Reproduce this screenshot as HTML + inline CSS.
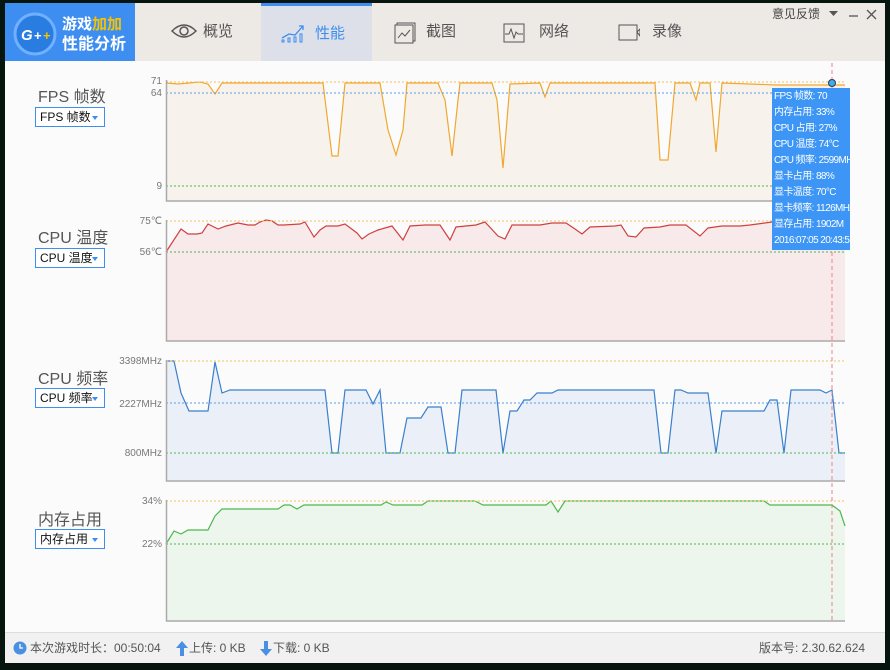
<!DOCTYPE html>
<html><head><meta charset="utf-8"><style>
body{margin:0;width:890px;height:670px;background:#07150f;overflow:hidden;font-family:"Liberation Sans","Noto Sans CJK SC",sans-serif;position:relative}
.win{position:absolute;left:5px;top:3px;width:880px;height:659px;background:#fbfbfb}
.hdr{position:absolute;left:0;top:0;width:880px;height:58px;background:#ede9e5}
.logo{position:absolute;left:0;top:0;width:130px;height:58px;background:#3d8ef0}
.tab{position:absolute;top:0;height:58px;font-size:15px;color:#555;line-height:58px}
.tab.act{background:#dde0e8;color:#3d8ef0;border-top:3px solid #3d8ef0;height:55px;line-height:55px}
.lbl{position:absolute;left:33px;font-size:16px;color:#555}
.dd{position:absolute;left:30px;border:1px solid #3d8ef0;background:#fff;font-size:12px;line-height:18px;color:#111;padding-left:4px;box-sizing:border-box;width:70px;height:20px}
.dd:after{content:"";position:absolute;right:6px;top:8px;border:3px solid transparent;border-top:4px solid #3d8ef0}
.tip{position:absolute;left:767px;top:85px;width:78px;height:162px;background:#3d95f5;color:#fff;font-size:10px;letter-spacing:-0.6px;line-height:16px;padding:1px 0 0 2px;box-sizing:border-box;white-space:nowrap;overflow:hidden}
.ft{position:absolute;left:0;top:629px;width:880px;height:30px;background:#f1f1f1;border-top:1px solid #ddd;font-size:12px;color:#555;line-height:30px}
</style></head><body>
<div class="win">
<div class="hdr">
 <div class="logo">
  <svg width="130" height="58"><circle cx="30" cy="31" r="20" fill="#2a7de0" stroke="#6fb0ff" stroke-width="3"/><text x="16" y="37" font-size="15" font-weight="bold" font-style="italic" fill="#fff" font-family="Liberation Sans">G</text><text x="29" y="37" font-size="13" font-weight="bold" fill="#fff">+</text><text x="38" y="37" font-size="13" font-weight="bold" fill="#f5c300">+</text>
  <text x="57" y="26" font-size="15" font-weight="bold" fill="#fff">游戏<tspan fill="#f5c300">加加</tspan></text>
  <text x="57" y="46" font-size="16" font-weight="bold" fill="#fff">性能分析</text></svg>
 </div>
 <div class="tab" style="left:130px;width:126px"><svg style="position:absolute;left:36px;top:20px" width="26" height="16"><path d="M1 8Q13 -4 25 8Q13 20 1 8Z" fill="none" stroke="#555" stroke-width="1.5"/><circle cx="13" cy="8" r="4" fill="none" stroke="#555" stroke-width="1.5"/></svg><span style="position:absolute;left:68px">概览</span></div>
 <div class="tab act" style="left:256px;width:111px"><svg style="position:absolute;left:20px;top:17px" width="24" height="20"><path d="M1 15L8 11L14 12L22 3M18 3H22V7" fill="none" stroke="#3d8ef0" stroke-width="1.3"/><rect x="1" y="17" width="2" height="2" fill="none" stroke="#3d8ef0"/><rect x="7" y="15" width="2" height="4" fill="none" stroke="#3d8ef0"/><rect x="13" y="14" width="2" height="5" fill="none" stroke="#3d8ef0"/><rect x="19" y="11" width="2" height="8" fill="none" stroke="#3d8ef0"/></svg><span style="position:absolute;left:54px">性能</span></div>
 <div class="tab" style="left:367px;width:120px"><svg style="position:absolute;left:22px;top:19px" width="22" height="22"><rect x="1" y="3" width="18" height="18" fill="none" stroke="#555"/><path d="M3 3V1H21V19H19" fill="none" stroke="#555"/><path d="M4 16L8 11L11 14L16 8" fill="none" stroke="#555"/></svg><span style="position:absolute;left:54px">截图</span></div>
 <div class="tab" style="left:490px;width:110px"><svg style="position:absolute;left:8px;top:20px" width="22" height="20"><rect x="1" y="1" width="20" height="18" fill="none" stroke="#555"/><path d="M2 11H6L8 6L11 15L13 9L15 11H20" fill="none" stroke="#555"/></svg><span style="position:absolute;left:44px">网络</span></div>
 <div class="tab" style="left:600px;width:110px"><svg style="position:absolute;left:13px;top:21px" width="22" height="18"><rect x="1" y="1" width="18" height="15" fill="none" stroke="#555"/><path d="M19 8L22 5V12Z" fill="none" stroke="#555"/></svg><span style="position:absolute;left:47px">录像</span></div>
 <div style="position:absolute;left:767px;top:2px;font-size:12px;color:#444">意见反馈</div>
 <svg style="position:absolute;left:822px;top:5px" width="55" height="14"><path d="M2 3H11L6.5 8Z" fill="#555"/><path d="M22 8H31" stroke="#555" stroke-width="1.3"/><path d="M40 2L49 11M49 2L40 11" stroke="#555" stroke-width="1.3"/></svg>
</div>

<div class="lbl" style="top:80px">FPS 帧数</div><div class="dd" style="top:104px">FPS 帧数</div>
<div class="lbl" style="top:221px">CPU 温度</div><div class="dd" style="top:245px">CPU 温度</div>
<div class="lbl" style="top:362px">CPU 频率</div><div class="dd" style="top:385px">CPU 频率</div>
<div class="lbl" style="top:503px">内存占用</div><div class="dd" style="top:526px">内存占用</div>

<svg style="position:absolute;left:-5px;top:-3px" width="890" height="670" font-size="10" fill="#777" font-family="Liberation Sans">
<g text-anchor="end" fill="#777">
<text x="162" y="84">71</text><text x="162" y="96">64</text><text x="162" y="189">9</text>
<text x="162" y="224">75℃</text><text x="162" y="255">56℃</text>
<text x="162" y="364">3398MHz</text><text x="162" y="407">2227MHz</text><text x="162" y="456">800MHz</text>
<text x="162" y="504">34%</text><text x="162" y="547">22%</text>
</g>
<polygon fill="#f7f3ec" points="166,83 178,84 200,82 208,84 215,94 222,83 260,83 323,83 332,156 338,156 345,83 380,83 388,130 396,155 403,130 407,83 438,83 445,100 452,156 458,100 460,83 492,83 497,100 503,168 510,84 540,83 545,97 550,83 655,83 660,160 668,160 675,83 690,83 696,100 700,83 710,83 716,152 722,83 777,85 845,85 845,201 166,201"/>
<polyline fill="none" stroke="#f0a830" stroke-width="1.2" points="166,83 178,84 200,82 208,84 215,94 222,83 260,83 323,83 332,156 338,156 345,83 380,83 388,130 396,155 403,130 407,83 438,83 445,100 452,156 458,100 460,83 492,83 497,100 503,168 510,84 540,83 545,97 550,83 655,83 660,160 668,160 675,83 690,83 696,100 700,83 710,83 716,152 722,83 777,85 845,85"/>
<line x1="166" y1="82" x2="845" y2="82" stroke="#f0c060" stroke-dasharray="2,2"/>
<line x1="166" y1="93" x2="845" y2="93" stroke="#5a9ee8" stroke-dasharray="2,2"/>
<line x1="166" y1="186" x2="845" y2="186" stroke="#4cb84c" stroke-dasharray="2,2"/>
<polygon fill="#f8eaea" points="166,252 181,229 188,234 197,234 202,233 208,224 214,227 218,229 226,226 238,223 248,225 255,225 260,222 266,220 272,221 278,225 284,225 300,224 305,222 314,237 320,230 326,226 338,226 345,224 357,233 362,239 369,234 378,230 392,226 403,240 410,226 425,225 440,225 450,240 456,227 476,225 485,222 498,236 505,239 512,225 540,225 552,223 566,223 575,229 582,234 590,227 615,226 621,225 628,236 636,237 644,228 660,227 670,225 686,225 700,236 708,228 722,226 740,226 750,225 772,222 845,222 845,341 166,341"/>
<polyline fill="none" stroke="#d04040" stroke-width="1.2" points="166,252 181,229 188,234 197,234 202,233 208,224 214,227 218,229 226,226 238,223 248,225 255,225 260,222 266,220 272,221 278,225 284,225 300,224 305,222 314,237 320,230 326,226 338,226 345,224 357,233 362,239 369,234 378,230 392,226 403,240 410,226 425,225 440,225 450,240 456,227 476,225 485,222 498,236 505,239 512,225 540,225 552,223 566,223 575,229 582,234 590,227 615,226 621,225 628,236 636,237 644,228 660,227 670,225 686,225 700,236 708,228 722,226 740,226 750,225 772,222 845,222"/>
<line x1="166" y1="221" x2="845" y2="221" stroke="#f0c060" stroke-dasharray="2,2"/>
<line x1="166" y1="252" x2="845" y2="252" stroke="#4cb84c" stroke-dasharray="2,2"/>
<polygon fill="#ebf0f8" points="166,361 174,361 181,393 189,411 208,411 215,362 222,393 230,390 325,390 332,453 338,453 345,390 366,390 373,404 380,390 386,453 400,453 407,418 421,418 428,407 441,407 448,453 455,453 462,390 496,390 503,453 510,411 517,411 524,400 530,400 537,393 552,393 558,390 654,390 661,453 668,453 675,390 681,390 688,393 708,393 716,453 722,411 764,411 770,400 777,400 784,453 791,390 820,390 826,393 832,390 839,453 845,453 845,481 166,481"/>
<polyline fill="none" stroke="#3a80cc" stroke-width="1.2" points="166,361 174,361 181,393 189,411 208,411 215,362 222,393 230,390 325,390 332,453 338,453 345,390 366,390 373,404 380,390 386,453 400,453 407,418 421,418 428,407 441,407 448,453 455,453 462,390 496,390 503,453 510,411 517,411 524,400 530,400 537,393 552,393 558,390 654,390 661,453 668,453 675,390 681,390 688,393 708,393 716,453 722,411 764,411 770,400 777,400 784,453 791,390 820,390 826,393 832,390 839,453 845,453"/>
<line x1="166" y1="361" x2="845" y2="361" stroke="#f0c060" stroke-dasharray="2,2"/>
<line x1="166" y1="403" x2="845" y2="403" stroke="#5a9ee8" stroke-dasharray="2,2"/>
<line x1="166" y1="453" x2="845" y2="453" stroke="#4cb84c" stroke-dasharray="2,2"/>
<polygon fill="#edf6ec" points="166,544 174,531 181,534 188,530 208,530 215,516 222,509 278,509 284,505 290,505 297,509 304,505 381,505 386,502 393,505 422,505 428,501 475,501 483,505 546,505 551,501 558,512 565,501 764,501 770,505 832,505 840,511 845,526 845,621 166,621"/>
<polyline fill="none" stroke="#4cb84c" stroke-width="1.2" points="166,544 174,531 181,534 188,530 208,530 215,516 222,509 278,509 284,505 290,505 297,509 304,505 381,505 386,502 393,505 422,505 428,501 475,501 483,505 546,505 551,501 558,512 565,501 764,501 770,505 832,505 840,511 845,526"/>
<line x1="166" y1="501" x2="845" y2="501" stroke="#f0c060" stroke-dasharray="2,2"/>
<line x1="166" y1="544" x2="845" y2="544" stroke="#4cb84c" stroke-dasharray="2,2"/>
<path fill="none" stroke="#aaa" stroke-width="1.5" d="M166.5 80V201H845M166.5 220V341H845M166.5 360V481H845M166.5 500V621H845"/>
<line x1="832" y1="63" x2="832" y2="621" stroke="#f08080" stroke-dasharray="4,3"/>
<circle cx="832" cy="83" r="3.5" fill="#3ab0e0" stroke="#336" stroke-width="1"/>
</svg>

<div class="tip">FPS 帧数: 70<br>内存占用: 33%<br>CPU 占用: 27%<br>CPU 温度: 74°C<br>CPU 频率: 2599MHz<br>显卡占用: 88%<br>显卡温度: 70°C<br>显卡频率: 1126MHz<br>显存占用: 1902M<br>2016:07:05 20:43:55</div>

<div class="ft">
 <svg style="position:absolute;left:8px;top:8px" width="14" height="14"><circle cx="7" cy="7" r="6.5" fill="#4a90e2"/><path d="M7 3V7H10" stroke="#fff" stroke-width="1.3" fill="none"/></svg>
 <span style="position:absolute;left:25px">本次游戏时长：00:50:04</span>
 <svg style="position:absolute;left:171px;top:8px" width="12" height="15"><path d="M6 0L12 7H8V15H4V7H0Z" fill="#4a90e2"/></svg>
 <span style="position:absolute;left:184px">上传: 0 KB</span>
 <svg style="position:absolute;left:255px;top:8px" width="12" height="15"><path d="M6 15L12 8H8V0H4V8H0Z" fill="#4a90e2"/></svg>
 <span style="position:absolute;left:268px">下载: 0 KB</span>
 <span style="position:absolute;left:754px">版本号: 2.30.62.624</span>
</div>
</div>
</body></html>
